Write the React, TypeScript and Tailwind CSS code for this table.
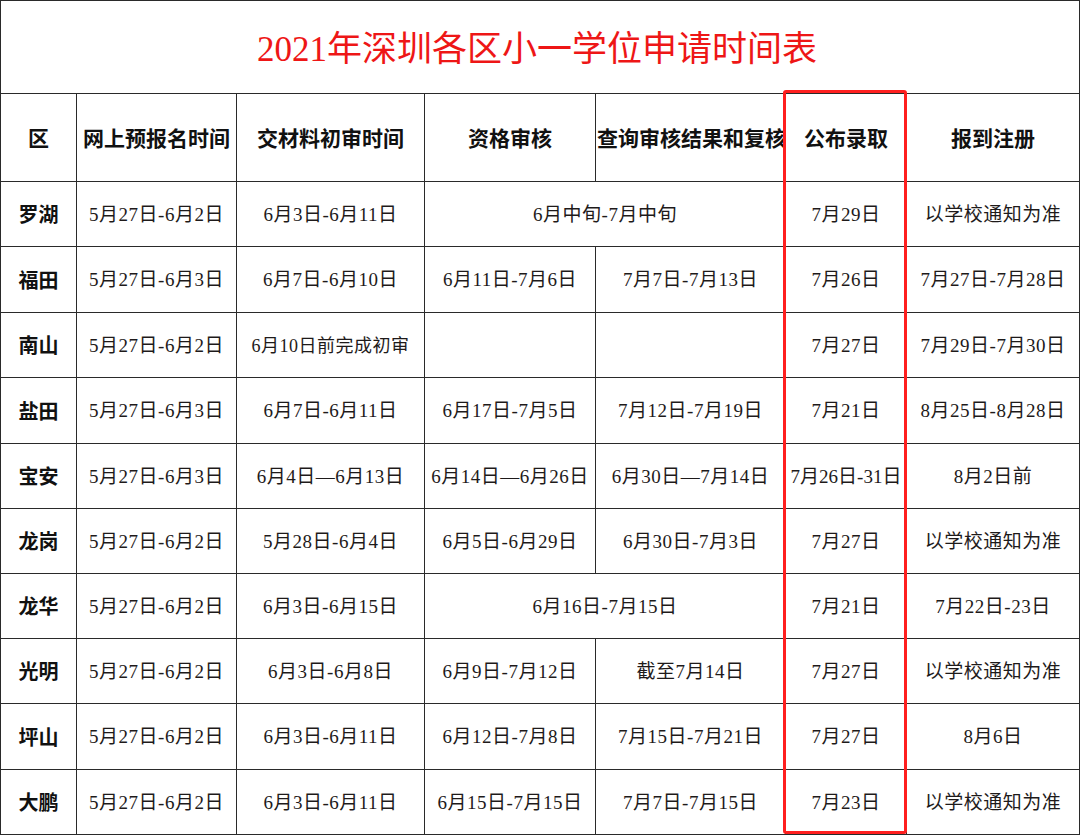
import React from "react";

type Row = { name: string; cells: (string | { span: string })[] };

const rows: Row[] = [
  { name: "罗湖", cells: ["5月27日-6月2日", "6月3日-6月11日", { span: "6月中旬-7月中旬" }, "7月29日", "以学校通知为准"] },
  { name: "福田", cells: ["5月27日-6月3日", "6月7日-6月10日", "6月11日-7月6日", "7月7日-7月13日", "7月26日", "7月27日-7月28日"] },
  { name: "南山", cells: ["5月27日-6月2日", "6月10日前完成初审", "", "", "7月27日", "7月29日-7月30日"] },
  { name: "盐田", cells: ["5月27日-6月3日", "6月7日-6月11日", "6月17日-7月5日", "7月12日-7月19日", "7月21日", "8月25日-8月28日"] },
  { name: "宝安", cells: ["5月27日-6月3日", "6月4日—6月13日", "6月14日—6月26日", "6月30日—7月14日", "7月26日-31日", "8月2日前"] },
  { name: "龙岗", cells: ["5月27日-6月2日", "5月28日-6月4日", "6月5日-6月29日", "6月30日-7月3日", "7月27日", "以学校通知为准"] },
  { name: "龙华", cells: ["5月27日-6月2日", "6月3日-6月15日", { span: "6月16日-7月15日" }, "7月21日", "7月22日-23日"] },
  { name: "光明", cells: ["5月27日-6月2日", "6月3日-6月8日", "6月9日-7月12日", "截至7月14日", "7月27日", "以学校通知为准"] },
  { name: "坪山", cells: ["5月27日-6月2日", "6月3日-6月11日", "6月12日-7月8日", "7月15日-7月21日", "7月27日", "8月6日"] },
  { name: "大鹏", cells: ["5月27日-6月2日", "6月3日-6月11日", "6月15日-7月15日", "7月7日-7月15日", "7月23日", "以学校通知为准"] },
];

const cell =
  "flex items-center justify-center border-r border-b border-[#2a2a2a] whitespace-nowrap overflow-hidden";
const head = `${cell} pt-[4px] text-[21px] font-bold text-[#111]`;
const data = `${cell} pt-[2px] tracking-[0.5px]`;

export default function App() {
  return (
    <div className="relative w-[1080px] h-[835px] bg-white font-['Liberation_Serif','Noto_Sans_CJK_SC',serif] text-[#1e1a1a]">
      <div className="grid grid-cols-[76px_160px_188px_171px_190px_121px_173px] grid-rows-[93px_88px_65px_66px_65px_66px_65px_65px_65px_65px_66px_65px] border-l border-t border-[#2a2a2a] w-[1080px]">
        <div className={`${cell} col-span-7 text-[35px] text-[#ee1616] pt-[6px] pr-[6px]`}>
          2021年深圳各区小一学位申请时间表
        </div>

        <div className={head}>区</div>
        <div className={head}>网上预报名时间</div>
        <div className={head}>交材料初审时间</div>
        <div className={head}>资格审核</div>
        <div className={`${head} !justify-start pl-[1px]`}>查询审核结果和复核</div>
        <div className={head}>公布录取</div>
        <div className={head}>报到注册</div>

        {rows.map((r) => (
          <React.Fragment key={r.name}>
            <div className={`${cell} pt-[2px] text-[20px] font-bold text-[#111]`}>{r.name}</div>
            {r.cells.map((c, i) =>
              typeof c === "string" ? (
                <div
                  key={i}
                  className={`${data} ${c === "6月10日前完成初审" ? "text-[18px]" : c === "7月26日-31日" ? "text-[19px] tracking-normal" : "text-[19px]"}`}
                >
                  {c}
                </div>
              ) : (
                <div key={i} className={`${data} col-span-2 text-[19px]`}>
                  {c.span}
                </div>
              )
            )}
          </React.Fragment>
        ))}
      </div>
      <div className="absolute left-[783px] top-[90px] w-[124px] h-[744px] border-[3px] border-[#ff1f1f] rounded-[3px] pointer-events-none" />
    </div>
  );
}
